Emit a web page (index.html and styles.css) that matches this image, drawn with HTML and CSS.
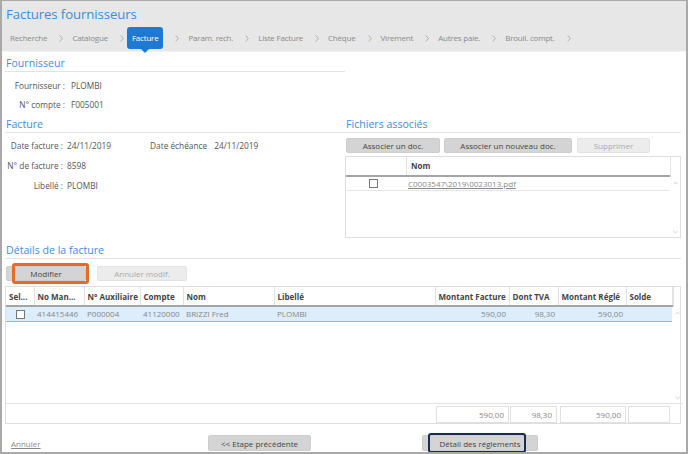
FILE: index.html
```html
<!DOCTYPE html>
<html lang="fr">
<head>
<meta charset="utf-8">
<title>Factures fournisseurs</title>
<link rel="stylesheet" href="styles.css">
</head>
<body>
<div class="frame">
  <header class="header">
    <h1 class="title">Factures fournisseurs</h1>
    <nav class="crumbs">
      <span class="crumb">Recherche</span><svg class="chev" viewBox="0 0 4 8"><polyline points="0.5,0.5 3.5,4 0.5,7.5"/></svg>
      <span class="crumb">Catalogue</span><svg class="chev" viewBox="0 0 4 8"><polyline points="0.5,0.5 3.5,4 0.5,7.5"/></svg>
      <span class="crumb active">Facture</span><svg class="chev" viewBox="0 0 4 8"><polyline points="0.5,0.5 3.5,4 0.5,7.5"/></svg>
      <span class="crumb">Param. rech.</span><svg class="chev" viewBox="0 0 4 8"><polyline points="0.5,0.5 3.5,4 0.5,7.5"/></svg>
      <span class="crumb">Liste Facture</span><svg class="chev" viewBox="0 0 4 8"><polyline points="0.5,0.5 3.5,4 0.5,7.5"/></svg>
      <span class="crumb">Chèque</span><svg class="chev" viewBox="0 0 4 8"><polyline points="0.5,0.5 3.5,4 0.5,7.5"/></svg>
      <span class="crumb">Virement</span><svg class="chev" viewBox="0 0 4 8"><polyline points="0.5,0.5 3.5,4 0.5,7.5"/></svg>
      <span class="crumb">Autres paie.</span><svg class="chev" viewBox="0 0 4 8"><polyline points="0.5,0.5 3.5,4 0.5,7.5"/></svg>
      <span class="crumb">Brouil. compt.</span><svg class="chev" viewBox="0 0 4 8"><polyline points="0.5,0.5 3.5,4 0.5,7.5"/></svg>
    </nav>
  </header>

  <main class="content">
    <div class="top">
      <section class="sec sec-fourn">
        <h2 class="sec-title">Fournisseur</h2>
        <div class="fields f1">
          <div class="field"><span class="lbl">Fournisseur :</span><span class="val">PLOMBI</span></div>
          <div class="field"><span class="lbl">N° compte :</span><span class="val">F005001</span></div>
        </div>
      </section>
      <div class="blank"></div>

      <section class="sec">
        <h2 class="sec-title">Facture</h2>
        <div class="fields f2">
          <div class="field"><span class="lbl">Date facture :</span><span class="val">24/11/2019</span><span class="lbl2">Date échéance</span><span class="val">24/11/2019</span></div>
          <div class="field"><span class="lbl">N° de facture :</span><span class="val">8598</span></div>
          <div class="field"><span class="lbl">Libellé :</span><span class="val">PLOMBI</span></div>
        </div>
      </section>

      <section class="sec sec-files">
        <h2 class="sec-title">Fichiers associés</h2>
        <div class="btns">
          <button class="btn b-assoc">Associer un doc.</button>
          <button class="btn b-new">Associer un nouveau doc.</button>
          <button class="btn disabled b-sup">Supprimer</button>
        </div>
        <div class="fgrid">
          <div class="fhead">
            <div class="fh-chk"></div>
            <div class="fh-nom">Nom</div>
          </div>
          <div class="corner"></div>
          <div class="fbody">
            <div class="frow">
              <div class="fc-chk"><span class="chk"></span></div>
              <div class="fc-nom"><a class="flink">C0003547\2019\0023013.pdf</a></div>
            </div>
          </div>
          <div class="vscroll">
            <svg viewBox="0 0 6 4"><polyline points="0.5,3.5 3,1 5.5,3.5"/></svg>
            <svg viewBox="0 0 6 4"><polyline points="0.5,0.5 3,3 5.5,0.5"/></svg>
          </div>
        </div>
      </section>
    </div>

    <section class="sec sec-details">
      <h2 class="sec-title">Détails de la facture</h2>
      <div class="btns dbtns">
        <span class="hl-wrap"><button class="btn b-mod">Modifier</button><span class="hl-orange"></span></span>
        <button class="btn disabled b-ann">Annuler modif.</button>
      </div>
      <div class="dgrid">
        <table class="dtable dhead">
          <colgroup>
            <col class="w-sel"><col class="w-man"><col class="w-aux"><col class="w-cpt"><col class="w-nom"><col class="w-lib"><col class="w-mf"><col class="w-tva"><col class="w-mr"><col class="w-sol">
          </colgroup>
          <tr>
            <th>Sel...</th><th>No Man...</th><th>N° Auxiliaire</th><th>Compte</th><th>Nom</th><th>Libellé</th><th>Montant Facture</th><th>Dont TVA</th><th>Montant Réglé</th><th>Solde</th>
          </tr>
        </table>
        <div class="corner"></div>
        <div class="dbody">
          <table class="dtable">
            <colgroup>
              <col class="w-sel"><col class="w-man"><col class="w-aux"><col class="w-cpt"><col class="w-nom"><col class="w-lib"><col class="w-mf"><col class="w-tva"><col class="w-mr"><col class="w-sol">
            </colgroup>
            <tr class="sel">
              <td class="c"><span class="chk"></span></td><td>414415446</td><td>P000004</td><td>41120000</td><td>BRIZZI Fred</td><td>PLOMBI</td><td class="r">590,00</td><td class="r">98,30</td><td class="r">590,00</td><td></td>
            </tr>
          </table>
        </div>
        <div class="vscroll">
          <svg viewBox="0 0 6 4"><polyline points="0.5,3.5 3,1 5.5,3.5"/></svg>
          <svg viewBox="0 0 6 4"><polyline points="0.5,0.5 3,3 5.5,0.5"/></svg>
        </div>
        <div class="dfoot">
          <span class="tot t-mf">590,00</span>
          <span class="tot t-tva">98,30</span>
          <span class="tot t-mr">590,00</span>
          <span class="tot t-sol"></span>
        </div>
      </div>
    </section>

    <footer class="footer">
      <a class="cancel">Annuler</a>
      <button class="btn b-prev">&lt;&lt; Etape précédente</button>
      <span class="hl-wrap b-det-wrap"><button class="btn b-det">Détail des réglements</button><span class="hl-navy"></span></span>
    </footer>
  </main>
</div>
</body>
</html>
```

FILE: styles.css
```css
* { box-sizing: border-box; }
html, body { margin: 0; padding: 0; background: #fff; }
body { font-family: "Open Sans", "Noto Sans", sans-serif; font-size: 8px; color: #555; }

.frame {
  width: 688px; height: 454px; overflow: hidden;
  border: 2px solid #a9a9a9; border-top-width: 1px;
  display: flex; flex-direction: column;
  background: #fff;
}

/* header */
.header { background: #e7e7e7; height: 51px; flex: none; border-bottom: 1px solid #f2f2f2; padding: 0 0 0 4px; }
.title { margin: 0; padding-top: 3px; font-weight: 400; font-size: 13.2px; line-height: 20px; color: #3a8ddb; letter-spacing: -0.1px; }
.crumbs { display: flex; align-items: center; height: 22px; margin-top: 3px; padding-left: 4px; }
.crumb { color: #8a8a8a; font-size: 8px; letter-spacing: -0.2px; line-height: 22px; position: relative; }
.crumb.active { background: #1f78d1; color: #fff; border-radius: 3px; padding: 0 5px; margin-left: -6px; }
.crumb.active::after {
  content: ""; position: absolute; left: 50%; bottom: -4px; margin-left: -4px;
  border-left: 4px solid transparent; border-right: 4px solid transparent; border-top: 4px solid #1f78d1;
}
.chev { width: 4px; height: 7px; margin: 0 9px 0 12px; fill: none; stroke: #999; stroke-width: 0.8; }

/* content */
.content { padding: 0 5px 0 3px; flex: 1; min-height: 0; display: flex; flex-direction: column; }
.top { display: grid; grid-template-columns: 340px 1fr; }
.sec-title {
  margin: 0; font-weight: 400; font-size: 10.6px; line-height: 16px; color: #3d8edb;
  border-bottom: 1px solid #e3e3e3; padding-left: 1px;
}
.sec-fourn .sec-title { margin-top: 3px; }
.top .sec:not(.sec-fourn) .sec-title { margin-top: 2px; }
.fields { padding-top: 4px; }
.field { display: flex; align-items: center; height: 19px; font-size: 8.3px; color: #555; }
.f2 { padding-top: 2px; }
.f2 .field { height: 20px; }
.lbl { text-align: right; flex: none; }
.f1 .lbl { width: 60px; margin-right: 6px; }
.f2 .lbl { width: 58px; margin-right: 4px; }
.val { color: #555; }
.lbl2 { margin-left: 39px; margin-right: 7px; }

/* buttons */
.btn {
  font-family: inherit; font-size: 8px; color: #444;
  background: #d4d4d4; border: 1px solid #cdcdcd; border-radius: 2px;
  height: 15px; padding: 0; line-height: 13px; cursor: default;
}
.btn.disabled { background: #ececec; color: #aaa; border-color: #e2e2e2; }
.btns { display: flex; margin-top: 5px; padding-left: 1px; }
.b-assoc { width: 94px; }
.b-new { width: 128px; margin-left: 4px; }
.b-sup { width: 73px; margin-left: 5px; }

/* files grid */
.fgrid {
  margin-top: 3px; height: 82px; border: 1px solid #dedede;
  display: grid; grid-template-columns: 1fr 10px; grid-template-rows: 20px 1fr;
}
.fhead { display: flex; border-bottom: 2px solid #a5a5a5; }
.fh-chk { width: 61px; border-right: 1px solid #e2e2e2; }
.fh-nom { padding-left: 4px; font-weight: 700; color: #444; line-height: 18px; }
.corner { border-left: 1px solid #e4e4e4; }
.fbody { overflow: hidden; }
.frow { display: flex; height: 14px; border-bottom: 1px solid #e6e6e6; align-items: center; }
.fc-chk { width: 61px; display: flex; padding-left: 23px; }
.flink { color: #888; text-decoration: underline; padding-left: 1px; }
.chk { display: inline-block; width: 9px; height: 9px; border: 1px solid #777; background: #fff; }
.vscroll {
  display: flex; flex-direction: column; justify-content: space-between; align-items: center;
  padding: 4px 0 3px;
}
.vscroll svg { width: 5px; height: 4px; fill: none; stroke: #b5b5b5; stroke-width: 0.8; }

/* details */
.sec-details { margin-top: 4px; }
.dbtns { margin-top: 7px; padding-left: 1px; }
.hl-wrap { position: relative; display: inline-block; }
.b-mod { width: 80px; }
.hl-orange {
  position: absolute; left: 6px; top: -3px; width: 77px; height: 21px;
  border: 3px solid #ea6a25; border-radius: 3px;
}
.b-ann { width: 90px; margin-left: 11px; }

.dgrid {
  margin-top: 5px; height: 138px; border: 1px solid #dedede;
  display: grid; grid-template-columns: 1fr 10px; grid-template-rows: 20px 1fr 20px;
}
.dtable { border-collapse: collapse; table-layout: fixed; width: 666px; }
.dhead { border-bottom: 2px solid #a5a5a5; height: 20px; }
.dhead th {
  text-align: left; font-weight: 700; color: #444; padding: 0 0 0 3px; height: 18px;
  border-right: 1px solid #e2e2e2; white-space: nowrap; overflow: hidden;
}
.w-sel { width: 28px; } .w-man { width: 50px; } .w-aux { width: 56px; } .w-cpt { width: 43px; }
.w-nom { width: 91px; } .w-lib { width: 161px; } .w-mf { width: 74px; } .w-tva { width: 49px; }
.w-mr { width: 68px; } .w-sol { width: 46px; }
.dbody { overflow: hidden; }
.dtable td { height: 14px; padding: 0 3px; color: #888; white-space: nowrap; overflow: hidden; }
.dtable td.r { text-align: right; }
.dtable td.c { text-align: center; }
.dtable td .chk { vertical-align: middle; }
tr.sel { background: #dcedfc; border-bottom: 1px solid #8cbbe8; }
.dfoot { grid-column: 1 / span 2; border-top: 1px solid #e3e3e3; position: relative; display: flex; padding-top: 2px; }
.tot {
  position: absolute; top: 2px; height: 17px; border: 1px solid #e0e0e0;
  text-align: right; padding-right: 4px; line-height: 15px; color: #888;
}
.t-mf { left: 430px; width: 73px; }
.t-tva { left: 504px; width: 47px; }
.t-mr { left: 554px; width: 66px; }
.t-sol { left: 622px; width: 42px; }

/* footer */
.footer { display: flex; align-items: flex-end; flex: 1; min-height: 0; padding-bottom: 1px; padding-left: 6px; }
.cancel { color: #888; text-decoration: underline; width: 197px; margin-bottom: 2px; }
.b-prev { width: 103px; height: 16px; }
.b-det-wrap { margin-left: 111px; }
.b-det { width: 116px; height: 16px; display: block; }
.hl-navy {
  position: absolute; left: 6px; top: -2px; width: 98px; height: 20px;
  border: 2px solid #1a2c52; border-radius: 3px;
}
```
